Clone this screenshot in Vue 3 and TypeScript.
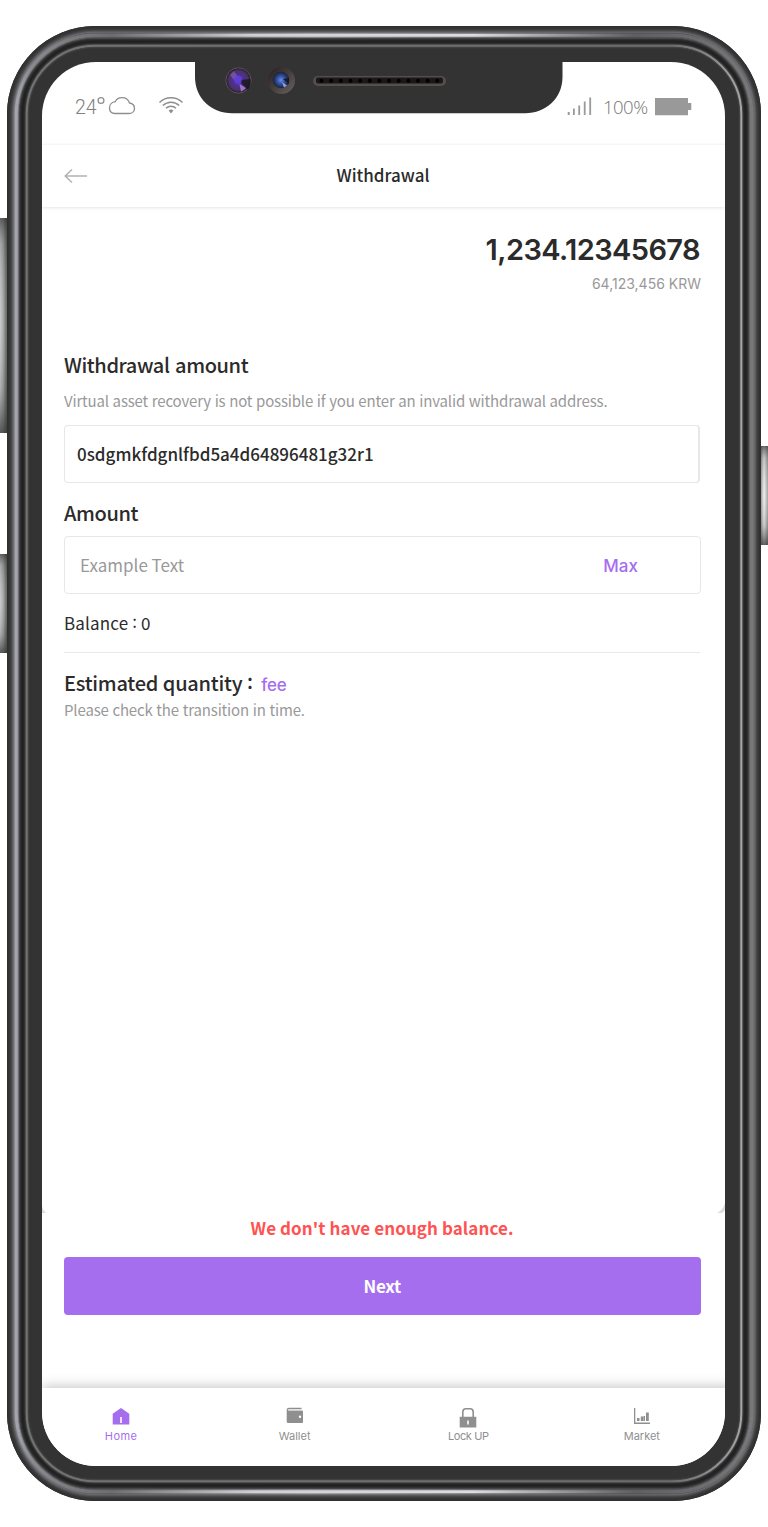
<script setup lang="ts">
interface Ring { inset: number; color: string }
interface Tab { name: string; active?: boolean }

const ringColors: string[] = [
  '#303030', '#333', '#353536', '#3b3b3c', '#464647', '#555557', '#68696c',
  'url(#glowSoft)', 'url(#glow)', 'url(#glow)', 'url(#glow)', 'url(#glowSoft)',
  '#4b4b4d', '#343434', '#292929', '#222', '#232323', '#2b2b2b', '#414141',
  'url(#line)', 'url(#line)', '#454545', '#383838', '#333',
]
const rings: Ring[] = ringColors.map((color, inset) => ({ inset, color }))
const holes: number[] = Array.from({ length: 13 }, (_, i) => 321.5 + i * 9.65)
const tabs: Tab[] = [
  { name: 'Home', active: true },
  { name: 'Wallet' },
  { name: 'Lock UP' },
  { name: 'Market' },
]
</script>

<template>
  <div class="stage">
    <svg class="device" width="768" height="1527" viewBox="0 0 768 1527" aria-hidden="true">
      <defs>
        <linearGradient id="glow">
          <stop offset="0" stop-color="#a3a4ad" /><stop offset=".02" stop-color="#8b8b90" />
          <stop offset=".13" stop-color="#6e6e70" /><stop offset=".32" stop-color="#cfcfd3" />
          <stop offset=".62" stop-color="#dcdce0" /><stop offset=".84" stop-color="#606062" />
          <stop offset="1" stop-color="#79797c" />
        </linearGradient>
        <linearGradient id="glowSoft">
          <stop offset="0" stop-color="#7d7e84" /><stop offset=".13" stop-color="#58585a" />
          <stop offset=".4" stop-color="#939396" /><stop offset=".84" stop-color="#505052" />
          <stop offset="1" stop-color="#6b6b6d" />
        </linearGradient>
        <linearGradient id="line">
          <stop offset="0" stop-color="#737373" /><stop offset=".9" stop-color="#6c6c6c" />
          <stop offset="1" stop-color="#a5a5a5" />
        </linearGradient>
        <linearGradient id="keyX">
          <stop offset="0" stop-color="#c8c8c8" /><stop offset=".4" stop-color="#a0a2a2" />
          <stop offset=".7" stop-color="#6c6c6c" /><stop offset="1" stop-color="#444" />
        </linearGradient>
        <linearGradient id="keyRight">
          <stop offset="0" stop-color="#777" /><stop offset=".5" stop-color="#eee" />
          <stop offset="1" stop-color="#999" />
        </linearGradient>
        <linearGradient id="keyShade" x2="0" y2="1">
          <stop offset="0" stop-color="#333" stop-opacity=".7" /><stop offset=".12" stop-color="#555" stop-opacity=".25" />
          <stop offset=".5" stop-color="#fff" stop-opacity=".1" /><stop offset=".8" stop-color="#555" stop-opacity=".2" />
          <stop offset="1" stop-color="#333" stop-opacity=".75" />
        </linearGradient>
        <radialGradient id="lensA">
          <stop offset="0" stop-color="#6242ed" /><stop offset=".4" stop-color="#4f318f" />
          <stop offset=".75" stop-color="#49336b" /><stop offset="1" stop-color="#211b2b" />
        </radialGradient>
        <radialGradient id="lensB">
          <stop offset="0" stop-color="#6690e8" /><stop offset=".5" stop-color="#314f9c" />
          <stop offset="1" stop-color="#1a2037" />
        </radialGradient>
        <linearGradient id="bezel" x2="1" y2="1">
          <stop offset="0" stop-color="#241d1d" /><stop offset="1" stop-color="#6a6260" />
        </linearGradient>
      </defs>
      <g>
        <rect x="0" y="218" width="8" height="215" fill="url(#keyX)" />
        <rect x="0" y="218" width="8" height="215" fill="url(#keyShade)" />
        <rect x="0" y="554" width="8" height="99" fill="url(#keyX)" />
        <rect x="0" y="554" width="8" height="99" fill="url(#keyShade)" />
        <rect x="760" y="446" width="8" height="99" fill="url(#keyRight)" />
        <rect x="760" y="446" width="8" height="99" fill="url(#keyShade)" />
      </g>
      <rect x="7" y="26" width="754" height="1475" rx="88" fill="#333" />
      <rect
        v-for="r in rings"
        :key="r.inset"
        :x="7.5 + r.inset"
        :y="26.5 + r.inset"
        :width="753 - 2 * r.inset"
        :height="1474 - 2 * r.inset"
        :rx="87.5 - r.inset"
        fill="none"
        :stroke="r.color"
        :stroke-width="r.inset === 0 ? 1 : 1.6"
      />
      <rect x="42" y="62" width="683" height="1404" rx="54" fill="#fff" />
      <path d="M195 61H562.500V77C562.500 98 546 113.300 525 113.300H232C211 113.300 195 98 195 77Z" fill="#333" />
      <circle cx="238.500" cy="80.500" r="12.700" fill="url(#lensA)" stroke="#5d5250" stroke-width="1" />
      <path d="M240 80L250 79A12 12 0 0 1 248 90L242 84Z" fill="#1b1620" opacity=".85" />
      <path d="M239.500 84L246 88A12 12 0 0 1 241 91.500Z" fill="#a67bd0" opacity=".9" />
      <path d="M230 75l4-4 4 6-4 3Z" fill="#9a72bb" opacity=".5" />
      <circle cx="238" cy="79.500" r="4" fill="#5f3ee0" opacity=".8" />
      <circle cx="281.500" cy="80.500" r="13.500" fill="url(#bezel)" />
      <circle cx="281" cy="80" r="8.300" fill="url(#lensB)" />
      <path d="M283 79L289 78V84Z" fill="#151b2c" />
      <path d="M282 82L287 85.500 284 87.500Z" fill="#8fa5dc" />
      <rect x="313" y="76" width="133" height="10" rx="5" fill="#564d4c" />
      <rect x="316" y="77.500" width="127" height="6" rx="2" fill="#191919" />
      <circle v-for="x in holes" :key="x" :cx="x" cy="80.700" r="2" fill="#000" />
    </svg>

    <main class="screen">
      <div class="status">
        <div class="weather">
          <span class="temp">24</span>
          <svg width="40" height="20" viewBox="96 96 40 20" fill="none" stroke="#8e8e8e" stroke-width="1.300">
            <circle cx="101" cy="100.500" r="2.900" />
            <path d="M115 113.500C111.500 113.500 109.500 111 109.500 107.800C109.500 104.500 112 102 115.300 101.600C116.500 99 119 97.700 122 97.700C126 97.700 128.500 100 129.500 103C132.500 103.500 134.500 105.500 134.500 108.400C134.500 111.500 132 113.500 129 113.500Z" />
          </svg>
        </div>
        <svg class="wifi" width="26" height="18" viewBox="0 0 26 18" fill="none" stroke="#8e8e8e" stroke-width="1.500">
          <path d="M1.500 6.500C8 .3 18 .3 24.500 6.500M4.800 9.500C9.500 5 16.500 5 21.200 9.500M8 12.300C10.800 9.500 15.200 9.500 18 12.300" />
          <path d="M10.600 14.500Q13 12.700 15.400 14.500L13 17.500Z" fill="#8e8e8e" stroke="none" />
        </svg>
        <div class="power">
          <svg width="25" height="20" viewBox="0 0 25 20" fill="#999">
            <path d="M.7 16h2v3h-2zM6 12.500h1.800V19H6zM11.300 9.500h1.800V19h-1.800zM16.800 5.500h1.800V19h-1.800zM22.300 1.500h1.800V19h-1.800z" />
          </svg>
          <span class="percent">100%</span>
          <svg width="37" height="18" viewBox="0 0 37 18" fill="#999"><path d="M0 0h33v5h3.300v7H33v5.300H0z" /></svg>
        </div>
      </div>

      <header class="bar">
        <svg width="24" height="16" viewBox="0 0 24 16" fill="none" stroke="#b3b3b3" stroke-width="1.500"><path d="M23 8H1M8 1.500L1.200 8 8 14.500" /></svg>
        <h1>Withdrawal</h1>
      </header>

      <section class="content">
        <div class="total">1,234.12345678</div>
        <div class="krw">64,123,456 KRW</div>
        <h2 class="first">Withdrawal amount</h2>
        <p class="hint">Virtual asset recovery is not possible if you enter an invalid withdrawal address.</p>
        <div class="field address">0sdgmkfdgnlfbd5a4d64896481g32r1</div>
        <h2 class="amount">Amount</h2>
        <div class="field entry"><span>Example Text</span><b>Max</b></div>
        <div class="balance">Balance <i>:</i> 0</div>
        <div class="estimate">Estimated quantity <i>:</i><b>fee</b></div>
        <p class="check">Please check the transition in time.</p>
      </section>

      <section class="action">
        <div class="edges">
          <svg width="5" height="10" viewBox="0 0 5 10"><path d="M0 3Q1 8 4.500 10H0Z" fill="#ddd" /></svg>
          <svg width="9" height="10" viewBox="0 0 9 10"><path d="M9 0Q7 7 1 10H6Q8 9 9 7Z" fill="#ddd" /></svg>
        </div>
        <p class="error">We don't have enough balance.</p>
        <button type="button">Next</button>
      </section>

      <nav class="tabs">
        <a v-for="tab in tabs" :key="tab.name" :class="{ active: tab.active }">
          <svg width="20" height="22" viewBox="0 0 20 22" fill="currentColor">
            <path v-if="tab.name === 'Home'" fill-rule="evenodd" d="M10 2L18.300 7.700V18.500H1.700V7.700ZM9.200 11V17H10.800V11Z" />
            <g v-else-if="tab.name === 'Wallet'">
              <path d="M1.700 4Q1.700 1.800 4 1.800H16.500V3.200H4Q3 3.200 3 4.500H17Q18 4.500 18 5.500V16Q18 17 17 17H3.200Q1.700 17 1.700 15.500Z" />
              <path d="M3.300 3.900H17" stroke="#ddd" stroke-width=".8" />
              <circle cx="15" cy="10.800" r="1.200" fill="#fff" />
            </g>
            <g v-else-if="tab.name === 'Lock UP'">
              <path d="M4.800 11V6Q4.800 2.800 8 2.800H12Q15.200 2.800 15.200 6V11" fill="none" stroke="currentColor" stroke-width="1.600" />
              <path fill-rule="evenodd" d="M1.700 10.800H18.300V21.500H1.700ZM9.200 14.500V18.500H10.800V14.500Z" />
            </g>
            <path v-else d="M2 2H3.300V16.500H18V18H2ZM5 12H7.500V15H5ZM8.800 10.500H11.200V15H8.800ZM11.500 10H13V15H11.500ZM14 6.500H16.800V15H14Z" />
          </svg>
          <span>{{ tab.name }}</span>
        </a>
      </nav>
    </main>
  </div>
</template>

<style>
body { margin: 0; background: #fff; }
</style>

<style scoped>
* { box-sizing: border-box; }
h1, h2, p { margin: 0; font-weight: 500; }
svg { display: block; flex: none; }
.stage { position: relative; width: 768px; height: 1527px; overflow: hidden; padding: 62px 0 0 42px; }
.device { position: absolute; inset: 0; }
.screen {
  position: relative; display: flex; flex-direction: column; width: 683px; height: 1404px;
  overflow: hidden; border-radius: 54px; color: #2b2b2b;
  font-family: "Noto Sans CJK KR", sans-serif;
}
.status { display: flex; height: 82px; padding: 34px 33px 0 33px; color: #8e8e8e; }
.weather { display: flex; width: 83px; }
.temp { width: 21px; padding-top: 1px; font: 300 19.5px/22px Roboto, sans-serif; letter-spacing: -.1px; color: #808080; }
.power { display: flex; margin-left: auto; }
.percent { width: 52px; margin-left: 11px; font: 300 18.5px/21px "Open Sans", sans-serif; letter-spacing: -.5px; color: #757575; }
.power > svg:last-child { margin-top: 2px; }
.bar {
  display: flex; align-items: center; height: 63px; padding-left: 22px;
  border-top: 1px solid #f6f6f6; box-shadow: 0 1px 3px rgba(0, 0, 0, .1);
}
.bar h1 { flex: 1; margin-right: 47px; padding-bottom: 3px; text-align: center; font-size: 17px; line-height: 24px; }
.content { display: flex; flex-direction: column; padding: 24px 25px 0 22px; }
.total { text-align: right; font: 600 29px/38px Inter, sans-serif; letter-spacing: -.6px; white-space: nowrap; }
.krw { margin-top: 4px; margin-right: -1px; text-align: right; font: 400 14px/22px Inter, sans-serif; color: #999; }
h2 { font-size: 20px; line-height: 28px; letter-spacing: -.4px; word-spacing: 1.5px; }
.first { margin-top: 56px; }
.hint { margin-top: 10px; font-size: 15px; font-weight: 400; line-height: 24px; letter-spacing: -.16px; word-spacing: .5px; color: #999; white-space: nowrap; }
.field { display: flex; align-items: center; height: 58px; border: 1px solid #e7e7e7; border-radius: 4px; }
.address { margin-top: 12px; padding-left: 12px; padding-bottom: 1px; border-right-width: 2px; font-size: 17px; font-weight: 500; }
.amount { margin-top: 16px; }
.entry { margin-top: 9px; margin-right: -1px; padding: 0 62px 0 15px; justify-content: space-between; font-size: 17px; color: #999; }
.entry span { padding-bottom: 1px; }
.entry b { padding-top: 1px; font: 500 17px/24px Inter, sans-serif; color: #a56eef; }
i { position: relative; top: -2px; font-style: normal; }
.balance { height: 59px; border-bottom: 1px solid #e9e9e9; font-size: 17px; letter-spacing: .15px; line-height: 57px; }
.estimate { display: flex; margin-top: 16px; font-size: 20px; font-weight: 500; line-height: 28px; letter-spacing: -.25px; word-spacing: .5px; white-space: pre; }
.estimate b { margin-left: 8.500px; font: 500 17px/32px Inter, sans-serif; color: #a56eef; }
.check { margin-top: -4px; font-size: 15px; line-height: 25px; font-weight: 400; letter-spacing: -.15px; word-spacing: .5px; color: #999; }
.action { margin-top: auto; height: 185px; }
.edges { display: flex; justify-content: space-between; height: 10px; }
.error { padding-top: 1px; padding-right: 3px; text-align: center; font-size: 17px; font-weight: 700; line-height: 28px; letter-spacing: .08px; color: #ff5252; }
button {
  display: block; width: 636.500px; height: 58px; margin: 15px 0 0 22px; padding: 0; border: 0; border-radius: 4px;
  background: #a56eef; color: #fff; font: 700 17px/58px "Noto Sans CJK KR", sans-serif; letter-spacing: -.3px;
}
.tabs {
  position: relative; display: flex; flex: none; height: 78px; padding-right: 7px; padding-top: 18px; margin-right: -5px;
  background: #fff; box-shadow: 0 -1px 12px rgba(0, 0, 0, .25);
}
.tabs a { display: flex; flex: none; width: 173.600px; flex-direction: column; align-items: center; color: #8f8f8f; padding-right: 15.500px; }
.tabs span { margin-top: 0; font: 400 11px/16px Inter, sans-serif; }
.tabs a:nth-child(3) span { letter-spacing: -.4px; }
.tabs .active { color: #a56eef; }
.tabs .active span { letter-spacing: .4px; }
</style>
